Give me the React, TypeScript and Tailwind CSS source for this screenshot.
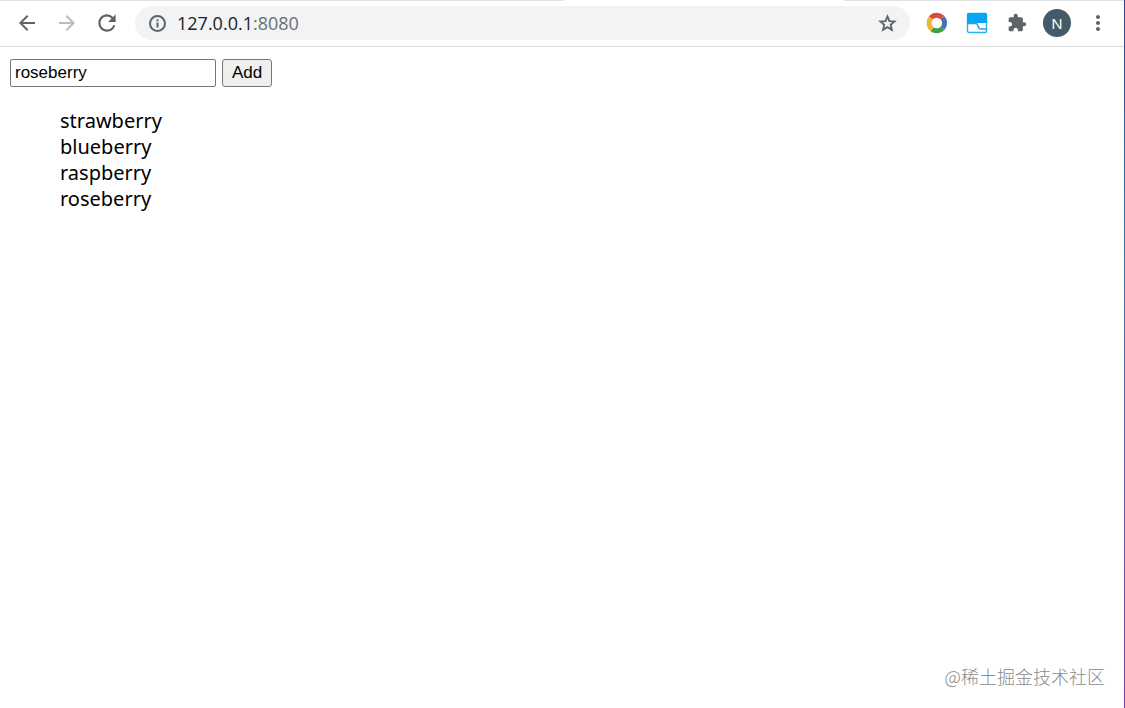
import { useState } from 'react';
import type { FormEvent } from 'react';
import { MdArrowBack, MdArrowForward, MdExtension, MdMoreVert, MdRefresh } from 'react-icons/md';

function InfoIcon() {
  return (
    <svg width="20" height="20" viewBox="0 0 20 20" fill="none" stroke="currentColor" strokeWidth="2">
      <circle cx="10.500" cy="10.500" r="7.500" />
      <path d="M10.500 9.500v5M10.500 6.200v2" />
    </svg>
  );
}

function StarIcon() {
  return (
    <svg width="22" height="22" viewBox="0 0 24 24" fill="none" stroke="currentColor" strokeWidth="2">
      <path d="M12.500 4.800l2.100 5.100 5.600.5-4.200 3.600 1.300 5.400-4.800-2.900-4.800 2.900L9 14l-4.200-3.600 5.600-.5z" />
    </svg>
  );
}

function RingIcon() {
  return (
    <svg width="22" height="22" viewBox="0 0 22 22" fill="none" strokeWidth="5">
      <path d="M4.700 6A8 8 0 0 1 16.300 5.400" stroke="#dc4a3c" />
      <path d="M16.300 5.400A8 8 0 0 1 16.800 16.200" stroke="#4a6fb5" />
      <path d="M16.800 16.200A8 8 0 0 1 6 17.200" stroke="#3fa04c" />
      <path d="M6 17.200A8 8 0 0 1 4.700 6" stroke="#f0b537" />
    </svg>
  );
}

function PanelIcon() {
  return (
    <svg width="22" height="22" viewBox="0 0 22 22" fill="none">
      <rect x="1.5" y="1.5" width="19" height="19" rx="1.5" fill="#fff" stroke="#2fb0ee" strokeWidth="1.4" />
      <path d="M1 2.5A1.5 1.5 0 0 1 2.5 1h17A1.5 1.5 0 0 1 21 2.5V11H1z" fill="#06a7f0" />
      <path d="M1.500 11.500h8.500c2.500 0 1.500 5.500 4.500 5.500h6" stroke="#2f9fe0" strokeWidth="1.5" />
    </svg>
  );
}

function Toolbar() {
  return (
    <header className="flex h-[47px] items-center border-b border-[#dadce0] px-[15px] text-[#5f6368]">
      <div className="flex gap-4">
        <button type="button" aria-label="Back">
          <MdArrowBack size={24} />
        </button>
        <button type="button" aria-label="Forward" className="text-[#babcbe]" disabled>
          <MdArrowForward size={24} />
        </button>
        <button type="button" aria-label="Reload">
          <MdRefresh size={26} className="-m-px" />
        </button>
      </div>

      {/* Address bar */}
      <div className="ml-4 flex h-[34px] flex-1 items-center rounded-full bg-[#f1f3f4] px-3">
        <InfoIcon />
        <p className="ml-[10px] flex-1 font-['Open_Sans','Noto_Sans',sans-serif] text-lg text-[#202124]">
          127.0.0.1<span className="text-[#6b6f73]">:8080</span>
        </p>
        <button type="button" aria-label="Bookmark">
          <StarIcon />
        </button>
      </div>

      <div className="ml-4 flex items-center gap-[18px]">
        <button type="button" aria-label="Ring extension">
          <RingIcon />
        </button>
        <button type="button" aria-label="Panel extension">
          <PanelIcon />
        </button>
        <button type="button" aria-label="Extensions" className="px-px">
          <MdExtension size={20} />
        </button>
        <button
          type="button"
          aria-label="Profile"
          className="-mx-[3px] size-7 rounded-full bg-[#455a64] font-['Noto_Sans',sans-serif] text-[15px] leading-7 text-white"
        >
          N
        </button>
        <button type="button" aria-label="Menu">
          <MdMoreVert size={24} />
        </button>
      </div>
    </header>
  );
}

export default function App() {
  const [value, setValue] = useState('roseberry');
  const [berries, setBerries] = useState(['strawberry', 'blueberry', 'raspberry', 'roseberry']);

  const handleSubmit = (event: FormEvent) => {
    event.preventDefault();
    setBerries([...berries, value]);
  };

  return (
    <div className="relative min-h-screen bg-white text-black">
      <Toolbar />

      {/* Bottom edge of the tab strip, open under the active tab */}
      <div className="absolute inset-x-0 top-0 flex h-px">
        <div className="w-1/2 bg-[#dee1e6]" />
        <div className="w-1/4 bg-white" />
        <div className="flex-1 bg-[#dee1e6]" />
      </div>

      <main className="px-[10px] py-3">
        <form onSubmit={handleSubmit} className="flex gap-[6px] font-['Liberation_Sans',Arial,sans-serif] text-[17px]">
          <input
            aria-label="Berry"
            value={value}
            onChange={(event) => setValue(event.target.value)}
            className="h-7 w-[206px] rounded-[2px] border border-[#767676] px-1"
          />
          <button type="submit" className="h-7 w-[50px] rounded-[3px] border border-[#767676] bg-[#efefef]">
            Add
          </button>
        </form>

        <ul className="mt-[21px] pl-[50px] font-['Noto_Sans','Open_Sans',sans-serif] text-xl leading-[26px]">
          {berries.map((berry, index) => (
            <li key={index}>{berry}</li>
          ))}
        </ul>
      </main>

      <p className="absolute right-5 bottom-[18px] font-['Noto_Sans_CJK_SC',sans-serif] text-lg font-light text-[#8a8a8a]">
        @稀土掘金技术社区
      </p>
      <div className="absolute inset-y-0 right-0 w-px bg-linear-to-b from-[#2d4590] via-[#3a78a8] via-35% to-[#7a3aa8]" />
    </div>
  );
}
